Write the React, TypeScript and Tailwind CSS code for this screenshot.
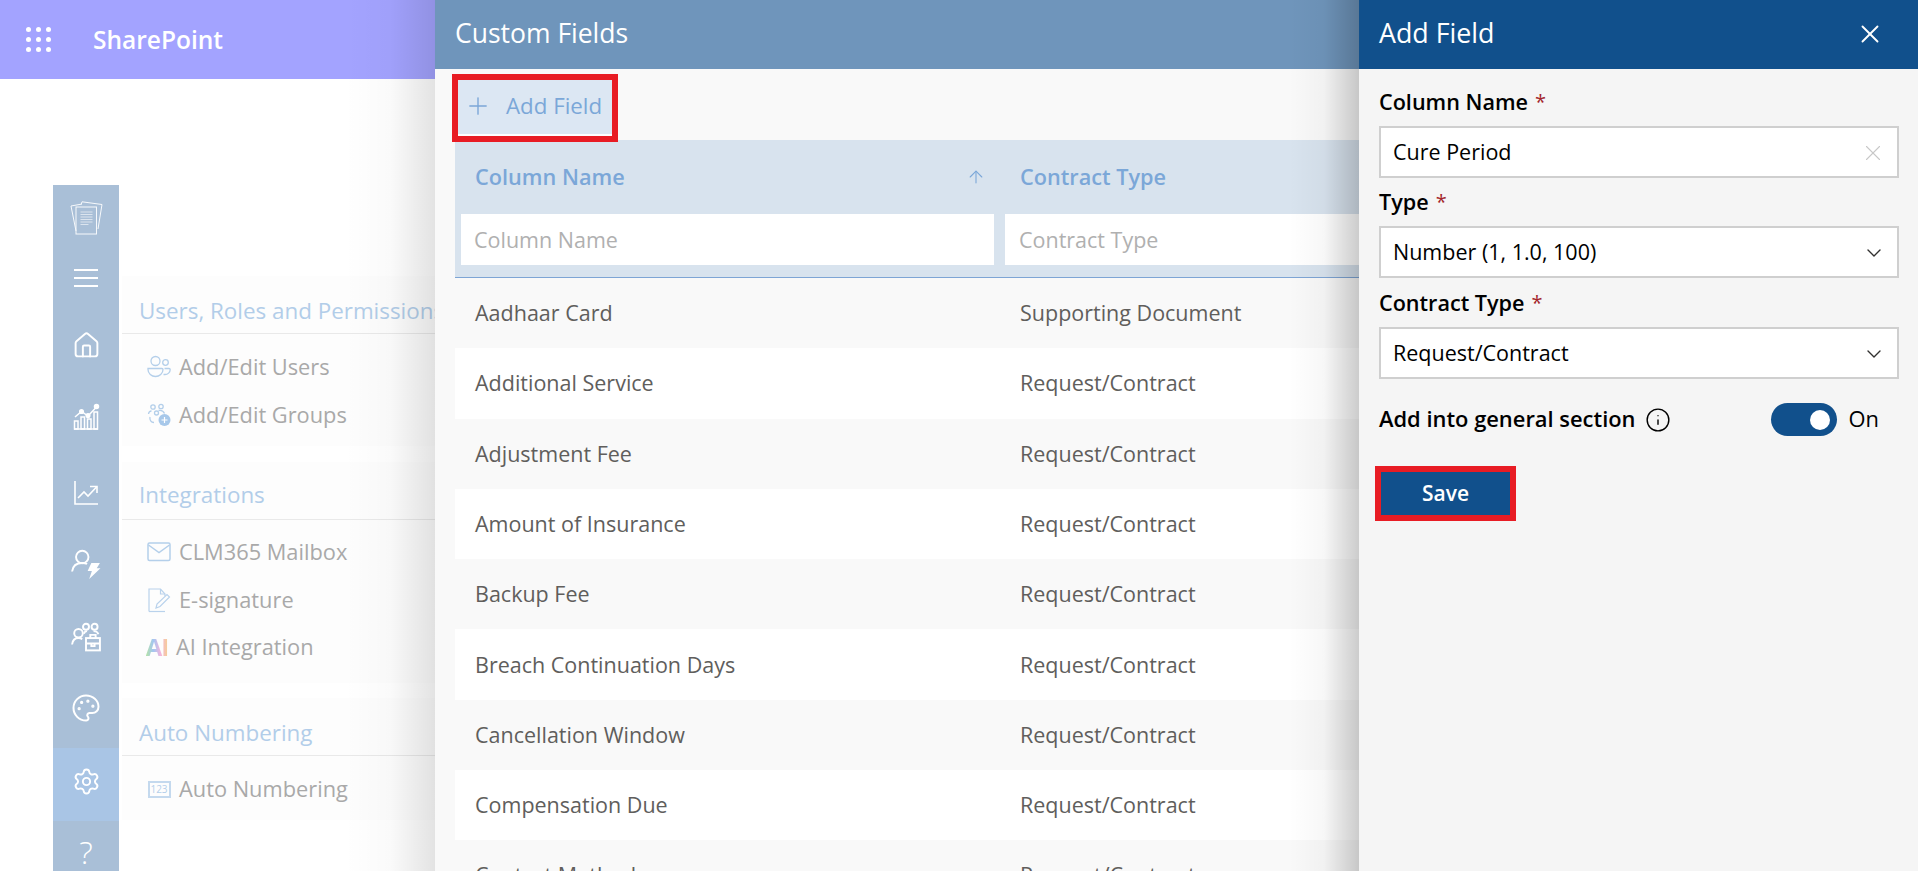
import React from "react";
import { House, Settings, Palette, Plus, ArrowUp, X, ChevronDown, Info } from "lucide-react";

const F = { fontFamily: '"Open Sans", "Noto Sans", sans-serif' };

const rows: [string, string][] = [
  ["Aadhaar Card", "Supporting Document"],
  ["Additional Service", "Request/Contract"],
  ["Adjustment Fee", "Request/Contract"],
  ["Amount of Insurance", "Request/Contract"],
  ["Backup Fee", "Request/Contract"],
  ["Breach Continuation Days", "Request/Contract"],
  ["Cancellation Window", "Request/Contract"],
  ["Compensation Due", "Request/Contract"],
  ["Contact Method", "Request/Contract"],
];

function DocsIcon() {
  return (
    <svg width="34" height="34" viewBox="0 0 34 34" fill="none" stroke="#fff" strokeWidth="1" opacity="0.9">
      <path d="M7 30 L2 5 L12 3.2" />
      <path d="M12 4 L13 .8 L33 3.5 L29 28" />
      <rect x="7" y="6" width="20.500" height="27" />
      <path d="M11.500 11h12M11.500 13.500h12M11.500 16h12M11.500 18.500h12M11.500 21h12M11.500 23.500h8" strokeWidth="1" opacity="0.65" />
    </svg>
  );
}

function BarsIcon() {
  return (
    <svg width="28" height="28" viewBox="0 0 28 28" fill="none" stroke="#fff" strokeWidth="1.500">
      <path d="M2 26h24" />
      <rect x="2.500" y="18" width="3.500" height="8" />
      <rect x="9" y="14" width="3.500" height="12" />
      <rect x="15.500" y="16" width="3.500" height="10" />
      <rect x="22" y="9" width="3.500" height="17" />
      <path d="M3 14l6.500-5.500 6.500 4.500 8.500-9" />
      <circle cx="9.500" cy="8.500" r="1.800" fill="#fff" />
      <circle cx="16" cy="12.500" r="1.800" fill="#fff" />
      <circle cx="24.500" cy="3.500" r="2" fill="#fff" />
    </svg>
  );
}

function TrendIcon() {
  return (
    <svg width="26" height="26" viewBox="0 0 26 26" fill="none" stroke="#fff" strokeWidth="1.600">
      <path d="M2 1v23h23" />
      <path d="M5 18l6-6 4 4 8.500-9" />
      <path d="M17 6.500h7v6.500" />
    </svg>
  );
}

function TeamIcon() {
  return (
    <svg width="30" height="30" viewBox="0 0 28 28" fill="none" stroke="#fff" strokeWidth="1.800">
      <circle cx="7" cy="10.500" r="4" />
      <path d="M1 21c.5-4 3-6 6-6 1.500 0 2.500.4 3.500 1" />
      <circle cx="14" cy="4.500" r="2.800" />
      <circle cx="22" cy="4.500" r="2.800" />
      <path d="M12 11c.5-1.500 1.500-2.500 3-2.500M21 8.500c2.500 0 4 1 4.500 3" />
      <rect x="14" y="15" width="13" height="11.500" />
      <path d="M18 15v-3h5v3M14 20h13M19 20v2.500h3V20" />
    </svg>
  );
}

function UserBolt() {
  return (
    <svg width="30" height="30" viewBox="0 0 28 28" fill="none" stroke="#fff" strokeWidth="1.800">
      <circle cx="10.500" cy="7.500" r="5.800" />
      <path d="M1 21c.6-5 4-8 9.500-8 2 0 3.500.4 4.500 1" />
      <path d="M19 13h8l-3 5h3.500L17 28l2.500-7.500h-4z" fill="#fff" stroke="none" />
    </svg>
  );
}

function UsersIcon() {
  return (
    <svg width="24" height="24" viewBox="0 0 24 24" fill="none" stroke="#b4cfea" strokeWidth="1.300">
      <circle cx="8.500" cy="6" r="4.500" />
      <circle cx="18.500" cy="7.500" r="2.800" />
      <path d="M1 13.500h14c.8 0 1 .3 1 1 0 4-3.500 7-7.500 7S1 18.500 1 14.500c0-.7 0-1 0-1z" />
      <path d="M17.500 13.500h4.500c1 0 1.200.4 1.200 1 0 3-2.500 5-5.200 5h-1.500" />
    </svg>
  );
}

function GroupPlus() {
  return (
    <svg width="24" height="24" viewBox="0 0 24 24" fill="none" stroke="#b4cfea" strokeWidth="1.300">
      <circle cx="6" cy="4" r="2.200" />
      <circle cx="14" cy="3.500" r="2.200" />
      <circle cx="9.500" cy="10" r="2" />
      <path d="M1.500 11c.3-2 1.500-3 3-3M11.500 7.500c2.500-.5 5 .5 6 3M3 14c-.6 3 1 5.500 4 5.500" />
      <circle cx="17.500" cy="17" r="6" fill="#a7c8ea" stroke="none" />
      <path d="M14.500 17h6M17.500 14v6" stroke="#fff" strokeWidth="1.200" />
    </svg>
  );
}

function MailIcon() {
  return (
    <svg width="24" height="20" viewBox="0 0 24 20" fill="none" stroke="#b4cfea" strokeWidth="1.500">
      <rect x="1" y="1" width="22" height="17.500" rx="1.500" />
      <path d="M1.500 3l10.500 7.500L22.500 3" />
    </svg>
  );
}

function SignIcon() {
  return (
    <svg width="24" height="25" viewBox="0 0 24 25" fill="none" stroke="#b9d2ec" strokeWidth="1.200">
      <path d="M2 23.500V1h11.500l4.500 5v2" />
      <path d="M13.500 1v5h4.500" />
      <path d="M2 23.500h16" />
      <path d="M9 20l1-4L20 6.500l2.500 2.500L13 18.500z" />
    </svg>
  );
}

function NumBox() {
  return (
    <span className="flex h-[17px] w-[23px] items-center justify-center border-2 border-[#c4d9ee] text-[10px] leading-none text-[#b4cfea]">
      123
    </span>
  );
}

function Section({ title, h, tight = false, children }: { title: string; h: string; tight?: boolean; children: React.ReactNode }) {
  return <div className={`${h} w-full bg-[#fdfdfd]`}>
    <div className={`flex h-[58px] items-end overflow-hidden whitespace-nowrap border-b border-[#e9e9e9] pl-[17px] text-[22.400px] leading-[30px] font-medium text-[#b2cde9] ${tight ? "pb-[9px]" : "pb-[7px]"}`}>
      {title}
    </div>
    <div className={tight ? "pt-[8px]" : "pt-[9px]"}>{children}</div>
  </div>;
}

function Item({ icon, label, shift = false }: { icon: React.ReactNode; label: string; shift?: boolean }) {
  return (
    <div className={`flex items-center text-[21.800px] text-[#a9a9a9] ${shift ? "h-[46px]" : "h-[48px]"}`}>
      <span className={`flex w-[24px] items-center justify-center ${shift ? "ml-[23px]" : "ml-[25px]"}`}>{icon}</span>
      <span className={shift ? "ml-[7px]" : "ml-[8px]"}>{label}</span>
    </div>
  );
}

function Field({ label, value, icon, mt }: { label: string; value: string; icon: React.ReactNode; mt: string }) {
  return (
    <div>
      <div className={`${mt} flex h-[30px] items-center text-[21.600px] font-semibold text-black`}>
        {label}
        <span className="ml-[7px] text-[20px] font-normal text-[#a4262c]">*</span>
      </div>
      <div className="mt-[9px] flex h-[52px] items-center justify-between border-2 border-[#cfcfcf] bg-white pl-[12px] pr-[11px] pt-[1px] text-[21.500px] text-black">
        {value}
        {icon}
      </div>
    </div>
  );
}

export default function App() {
  return (
    <div style={F} className="flex h-screen w-screen overflow-hidden bg-white">
      {/* Background page */}
      <div className="relative h-full w-[435px] shrink-0 overflow-hidden">
        <div className="flex h-[79px] items-center bg-[#a3a3ff]">
          <div className="ml-[26px] grid grid-cols-3 gap-[5px]">
            {Array.from({ length: 9 }).map((_, i) => (
              <span key={i} className="h-[5px] w-[5px] rounded-full bg-white" />
            ))}
          </div>
          <span className="ml-[42px] pt-[2px] text-[24.500px] font-semibold text-white">SharePoint</span>
        </div>
        <div className="flex pl-[53px]">
          <div className="mt-[106px] flex w-[66px] shrink-0 flex-col bg-[#a9bfd7] text-white">
            <div className="flex h-[65px] items-center justify-center"><DocsIcon /></div>
            <div className="flex h-[60px] items-center justify-center pb-[5px]">
              <div className="flex w-[24px] flex-col gap-[6px]">
                <span className="h-[2px] bg-white" /><span className="h-[2px] bg-white" /><span className="h-[2px] bg-white" />
              </div>
            </div>
            <div className="flex h-[73px] items-center justify-center pb-[2px]"><House size={29} strokeWidth={1.6} /></div>
            <div className="flex h-[73px] items-center justify-center pb-[6px]"><BarsIcon /></div>
            <div className="flex h-[73px] items-center justify-center"><TrendIcon /></div>
            <div className="flex h-[73px] items-center justify-center pb-[4px]"><UserBolt /></div>
            <div className="flex h-[73px] items-center justify-center pb-[4px]"><TeamIcon /></div>
            <div className="flex h-[73px] items-center justify-center pb-[8px]"><Palette size={30} strokeWidth={1.6} /></div>
            <div className="flex h-[73px] items-center justify-center bg-[#a9c5e5] pb-[7px]"><Settings size={29} strokeWidth={1.6} /></div>
            <div className="flex h-[50px] items-start justify-center pt-[14px] text-[32px] leading-[34px] font-light">?</div>
          </div>
          <div className="ml-[3px] mt-[197px] flex-1 overflow-hidden">
            <Section title="Users, Roles and Permissions" h="h-[170px] mb-[16px]">
              <Item icon={<UsersIcon />} label="Add/Edit Users" />
              <Item icon={<GroupPlus />} label="Add/Edit Groups" />
            </Section>
            <Section tight title="Integrations" h="h-[221px] mb-[15px]">
              <Item icon={<MailIcon />} label="CLM365 Mailbox" />
              <Item icon={<SignIcon />} label="E-signature" />
              <Item
                shift
                icon={
                  <span className="bg-[linear-gradient(90deg,#b5e3a6,#a3c6f2,#f2b6dc,#f7d08f)] bg-clip-text text-[24px] leading-none font-bold tracking-[-1px] text-transparent">
                    AI
                  </span>
                }
                label="AI Integration"
              />
            </Section>
            <Section title="Auto Numbering" h="h-[122px]">
              <Item icon={<NumBox />} label="Auto Numbering" />
            </Section>
          </div>
        </div>
        <div className="pointer-events-none absolute inset-y-0 right-0 w-[90px] bg-[linear-gradient(90deg,rgba(0,0,0,0),rgba(0,0,0,0.02)_50%,rgba(0,0,0,0.11))]" />
      </div>

      {/* Custom Fields panel */}
      <div className="relative h-full w-[924px] shrink-0 overflow-hidden bg-[#f9f9f9]">
        <div className="flex h-[69px] items-center bg-[#6f95bb] pb-[2px] pl-[20px] text-[26.500px] text-white">Custom Fields</div>
        <div className="h-[71px] pl-[17px] pt-[5px]">
          <div className="relative z-10 h-[68px] w-[166px] border-[6px] border-[#e81c24] bg-[#dce7f3]">
            <div className="flex h-[52px] items-center pl-[6px] text-[22.300px] text-[#7ba7d8]">
              <Plus size={28} strokeWidth={1.2} />
              <span className="ml-[14px]">Add Field</span>
            </div>
            <div className="absolute inset-x-0 bottom-0 h-[2px] bg-white" />
          </div>
        </div>
        <div className="ml-[20px]">
          <div className="h-[138px] border-b border-[#7ea5d5] bg-[#d8e3ee]">
            <div className="flex h-[74px] items-center text-[21.700px] font-semibold text-[#7ba7d8]">
              <div className="flex w-[545px] items-center justify-between pl-[20px] pr-[14px]">
                Column Name
                <ArrowUp size={20} strokeWidth={1.3} />
              </div>
              <div className="pl-[20px]">Contract Type</div>
            </div>
            <div className="flex h-[51px] text-[21.500px] text-[#b0b0b0]">
              <div className="ml-[6px] flex w-[533px] items-center bg-white pl-[13px] pt-[2px]">Column Name</div>
              <div className="ml-[11px] flex flex-1 items-center bg-white pl-[14px] pt-[2px]">Contract Type</div>
            </div>
          </div>
          {rows.map(([a, b], i) => (
            <div
              key={a}
              className={`flex h-[70.3px] items-center text-[21.500px] text-[#605e5c] ${i % 2 === 0 ? "bg-[#f9f9f9]" : "bg-white"}`}
            >
              <div className="w-[545px] pl-[20px]">{a}</div>
              <div className="pl-[20px]">{b}</div>
            </div>
          ))}
        </div>
        <div className="pointer-events-none absolute inset-y-0 right-0 w-[70px] bg-[linear-gradient(90deg,rgba(0,0,0,0),rgba(0,0,0,0.03)_50%,rgba(0,0,0,0.2))]" />
      </div>

      {/* Add Field panel */}
      <div className="h-full flex-1 bg-[#f5f5f5]">
        <div className="flex h-[69px] items-center justify-between bg-[#11508c] pb-[2px] pl-[20px] pr-[33px] text-[26.800px] text-white">
          Add Field
          <X size={30} strokeWidth={1.5} />
        </div>
        <div className="pl-[20px] pr-[19px]">
          <Field mt="mt-[18px]" label="Column Name" value="Cure Period" icon={<X size={26} strokeWidth={1} className="text-[#c8c8c8]" />} />
          <Field mt="mt-[9px]" label="Type" value="Number (1, 1.0, 100)" icon={<ChevronDown size={24} strokeWidth={1.4} className="text-[#323130]" />} />
          <Field mt="mt-[10px]" label="Contract Type" value="Request/Contract" icon={<ChevronDown size={24} strokeWidth={1.4} className="text-[#323130]" />} />
          <div className="mt-[24px] flex h-[33px] items-center text-[21.900px] text-black">
            <span className="font-semibold">Add into general section</span>
            <Info size={26} strokeWidth={1.3} className="ml-[9px]" />
            <div className="ml-auto flex h-[33px] w-[66px] items-center justify-end rounded-full bg-[#11508c] pr-[7px]">
              <span className="h-[20px] w-[20px] rounded-full bg-white" />
            </div>
            <span className="ml-[12px] mr-[20px]">On</span>
          </div>
          <div className="-ml-[4px] mt-[30px] flex h-[55px] w-[141px] items-center justify-center border-[6px] border-[#e81c24] bg-[#11508c] pt-[1px] text-[21px] font-semibold text-white">
            Save
          </div>
        </div>
      </div>
    </div>
  );
}
